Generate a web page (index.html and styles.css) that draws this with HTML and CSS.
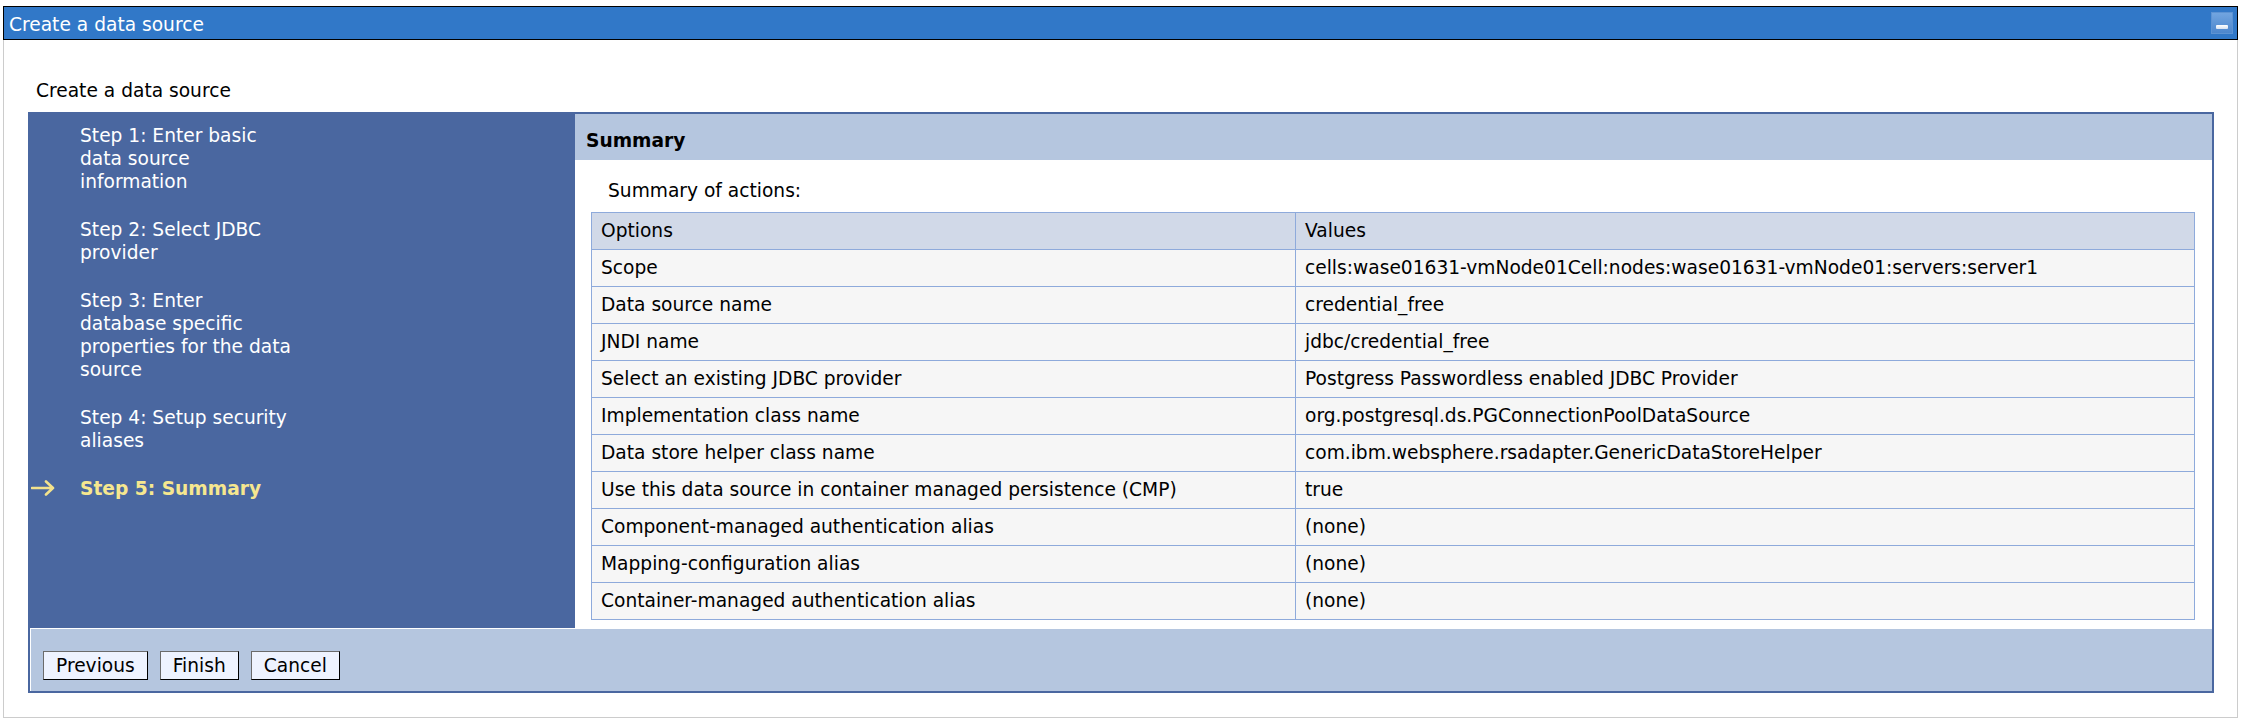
FILE: index.html
```html
<!DOCTYPE html>
<html lang="en">
<head>
<meta charset="utf-8">
<title>Create a data source</title>
<link rel="stylesheet" href="styles.css">
</head>
<body>
<div class="window">
  <div class="titlebar">
    <span class="title-text">Create a data source</span>
    <span class="minimize" title="Minimize"><span class="minimize-bar"></span></span>
  </div>
  <div class="panel">
    <div class="page-title">Create a data source</div>
    <div class="wizard">
      <div class="wizard-main">
        <ul class="steps">
          <li class="step"><span class="marker"></span><span class="step-text">Step 1: Enter basic<br>data source<br>information</span></li>
          <li class="step"><span class="marker"></span><span class="step-text">Step 2: Select JDBC<br>provider</span></li>
          <li class="step"><span class="marker"></span><span class="step-text">Step 3: Enter<br>database specific<br>properties for the data<br>source</span></li>
          <li class="step"><span class="marker"></span><span class="step-text">Step 4: Setup security<br>aliases</span></li>
          <li class="step current"><span class="marker"><svg class="arrow" width="25" height="16" viewBox="0 0 25 16"><path d="M1 8 H22 M15 1.5 L22 8 L15 14.5" fill="none" stroke="#f3e28c" stroke-width="2.6" stroke-linecap="round" stroke-linejoin="round"/></svg></span><span class="step-text">Step 5: Summary</span></li>
        </ul>
        <div class="pane">
          <div class="pane-header">Summary</div>
          <div class="pane-body">
            <div class="intro">Summary of actions:</div>
            <table class="summary">
              <colgroup><col class="col-opt"><col class="col-val"></colgroup>
              <thead>
                <tr><th>Options</th><th>Values</th></tr>
              </thead>
              <tbody>
                <tr><td>Scope</td><td>cells:wase01631-vmNode01Cell:nodes:wase01631-vmNode01:servers:server1</td></tr>
                <tr><td>Data source name</td><td>credential_free</td></tr>
                <tr><td>JNDI name</td><td>jdbc/credential_free</td></tr>
                <tr><td>Select an existing JDBC provider</td><td>Postgress Passwordless enabled JDBC Provider</td></tr>
                <tr><td>Implementation class name</td><td>org.postgresql.ds.PGConnectionPoolDataSource</td></tr>
                <tr><td>Data store helper class name</td><td>com.ibm.websphere.rsadapter.GenericDataStoreHelper</td></tr>
                <tr><td>Use this data source in container managed persistence (CMP)</td><td>true</td></tr>
                <tr><td>Component-managed authentication alias</td><td>(none)</td></tr>
                <tr><td>Mapping-configuration alias</td><td>(none)</td></tr>
                <tr><td>Container-managed authentication alias</td><td>(none)</td></tr>
              </tbody>
            </table>
          </div>
        </div>
      </div>
      <div class="wizard-footer">
        <button class="btn" type="button">Previous</button>
        <button class="btn" type="button">Finish</button>
        <button class="btn" type="button">Cancel</button>
      </div>
    </div>
  </div>
</div>
</body>
</html>
```
FILE: styles.css
```css
html, body {
  margin: 0;
  padding: 0;
  background: #ffffff;
}

body {
  font-family: "DejaVu Sans", Verdana, sans-serif;
  font-size: 18.64px;
  color: #000;
}

.window {
  margin: 6px 10px 0 3px;
}

.titlebar {
  box-sizing: border-box;
  height: 34px;
  background: #3178c8;
  border: 1px solid #000;
  display: flex;
  align-items: center;
  justify-content: space-between;
  padding: 0 4px 0 5px;
  color: #fff;
}

.title-text {
  line-height: 22px;
  padding-top: 3px;
}

.minimize {
  box-sizing: border-box;
  width: 22px;
  height: 22px;
  background: linear-gradient(#71a5e0, #4d87cd);
  border: 1px solid #5d93d3;
  display: flex;
  align-items: flex-end;
  justify-content: center;
  padding-bottom: 4px;
}

.minimize-bar {
  display: block;
  width: 12px;
  height: 4px;
  background: linear-gradient(#ffffff, #d6e2f2);
  border-radius: 1px;
}

.panel {
  box-sizing: border-box;
  height: 678px;
  border: 1px solid #cccccc;
  border-top: none;
  padding: 40px 23px 0 24px;
}

.page-title {
  line-height: 22px;
  padding-left: 8px;
  margin-bottom: 10px;
}

.wizard {
  border: 2px solid #4a67a0;
  background: #4a67a0;
}

.wizard-main {
  display: flex;
  align-items: stretch;
}

.steps {
  list-style: none;
  margin: 0;
  padding: 10px 0 0 0;
  width: 545px;
  flex: none;
  background: #4a67a0;
  color: #ffffff;
}

.step {
  display: flex;
  align-items: flex-start;
  line-height: 23px;
  margin-bottom: 25px;
}

.marker {
  width: 49px;
  flex: none;
  display: flex;
  padding-left: 1px;
}

.arrow {
  display: block;
  margin-top: 3px;
}

.step.current .step-text {
  color: #f6e78f;
  font-weight: bold;
}

.pane {
  flex: 1;
  background: #ffffff;
}

.pane-header {
  background: #b5c6df;
  font-weight: bold;
  line-height: 22px;
  padding: 16px 11px 8px;
}

.pane-body {
  padding: 20px 17px 8px 16px;
}

.intro {
  line-height: 22px;
  padding-left: 17px;
  margin-bottom: 10px;
}

.summary {
  width: 100%;
  border-collapse: collapse;
  table-layout: fixed;
}

.col-opt {
  width: 704px;
}

.summary th,
.summary td {
  border: 1px solid #8eaadb;
  line-height: 36px;
  height: 36px;
  padding: 0 9px;
  text-align: left;
  font-weight: normal;
  white-space: nowrap;
  box-sizing: border-box;
}

.summary th {
  background: #d1d9e8;
}

.summary td {
  background: #f6f6f6;
}

.wizard-footer {
  background: #b5c6df;
  border-top: 1px solid #ffffff;
  border-left: 1px solid #ffffff;
  padding: 22px 12px 11px 12px;
  display: flex;
  gap: 12px;
}

.btn {
  box-sizing: border-box;
  height: 29px;
  padding: 0 12px;
  font-family: "DejaVu Sans", Verdana, sans-serif;
  font-size: 18.64px;
  line-height: 27px;
  color: #000;
  background: #eef3ff;
  border: 1px solid;
  border-color: #6b6b6b #000 #000 #6b6b6b;
  border-radius: 0;
}
```
